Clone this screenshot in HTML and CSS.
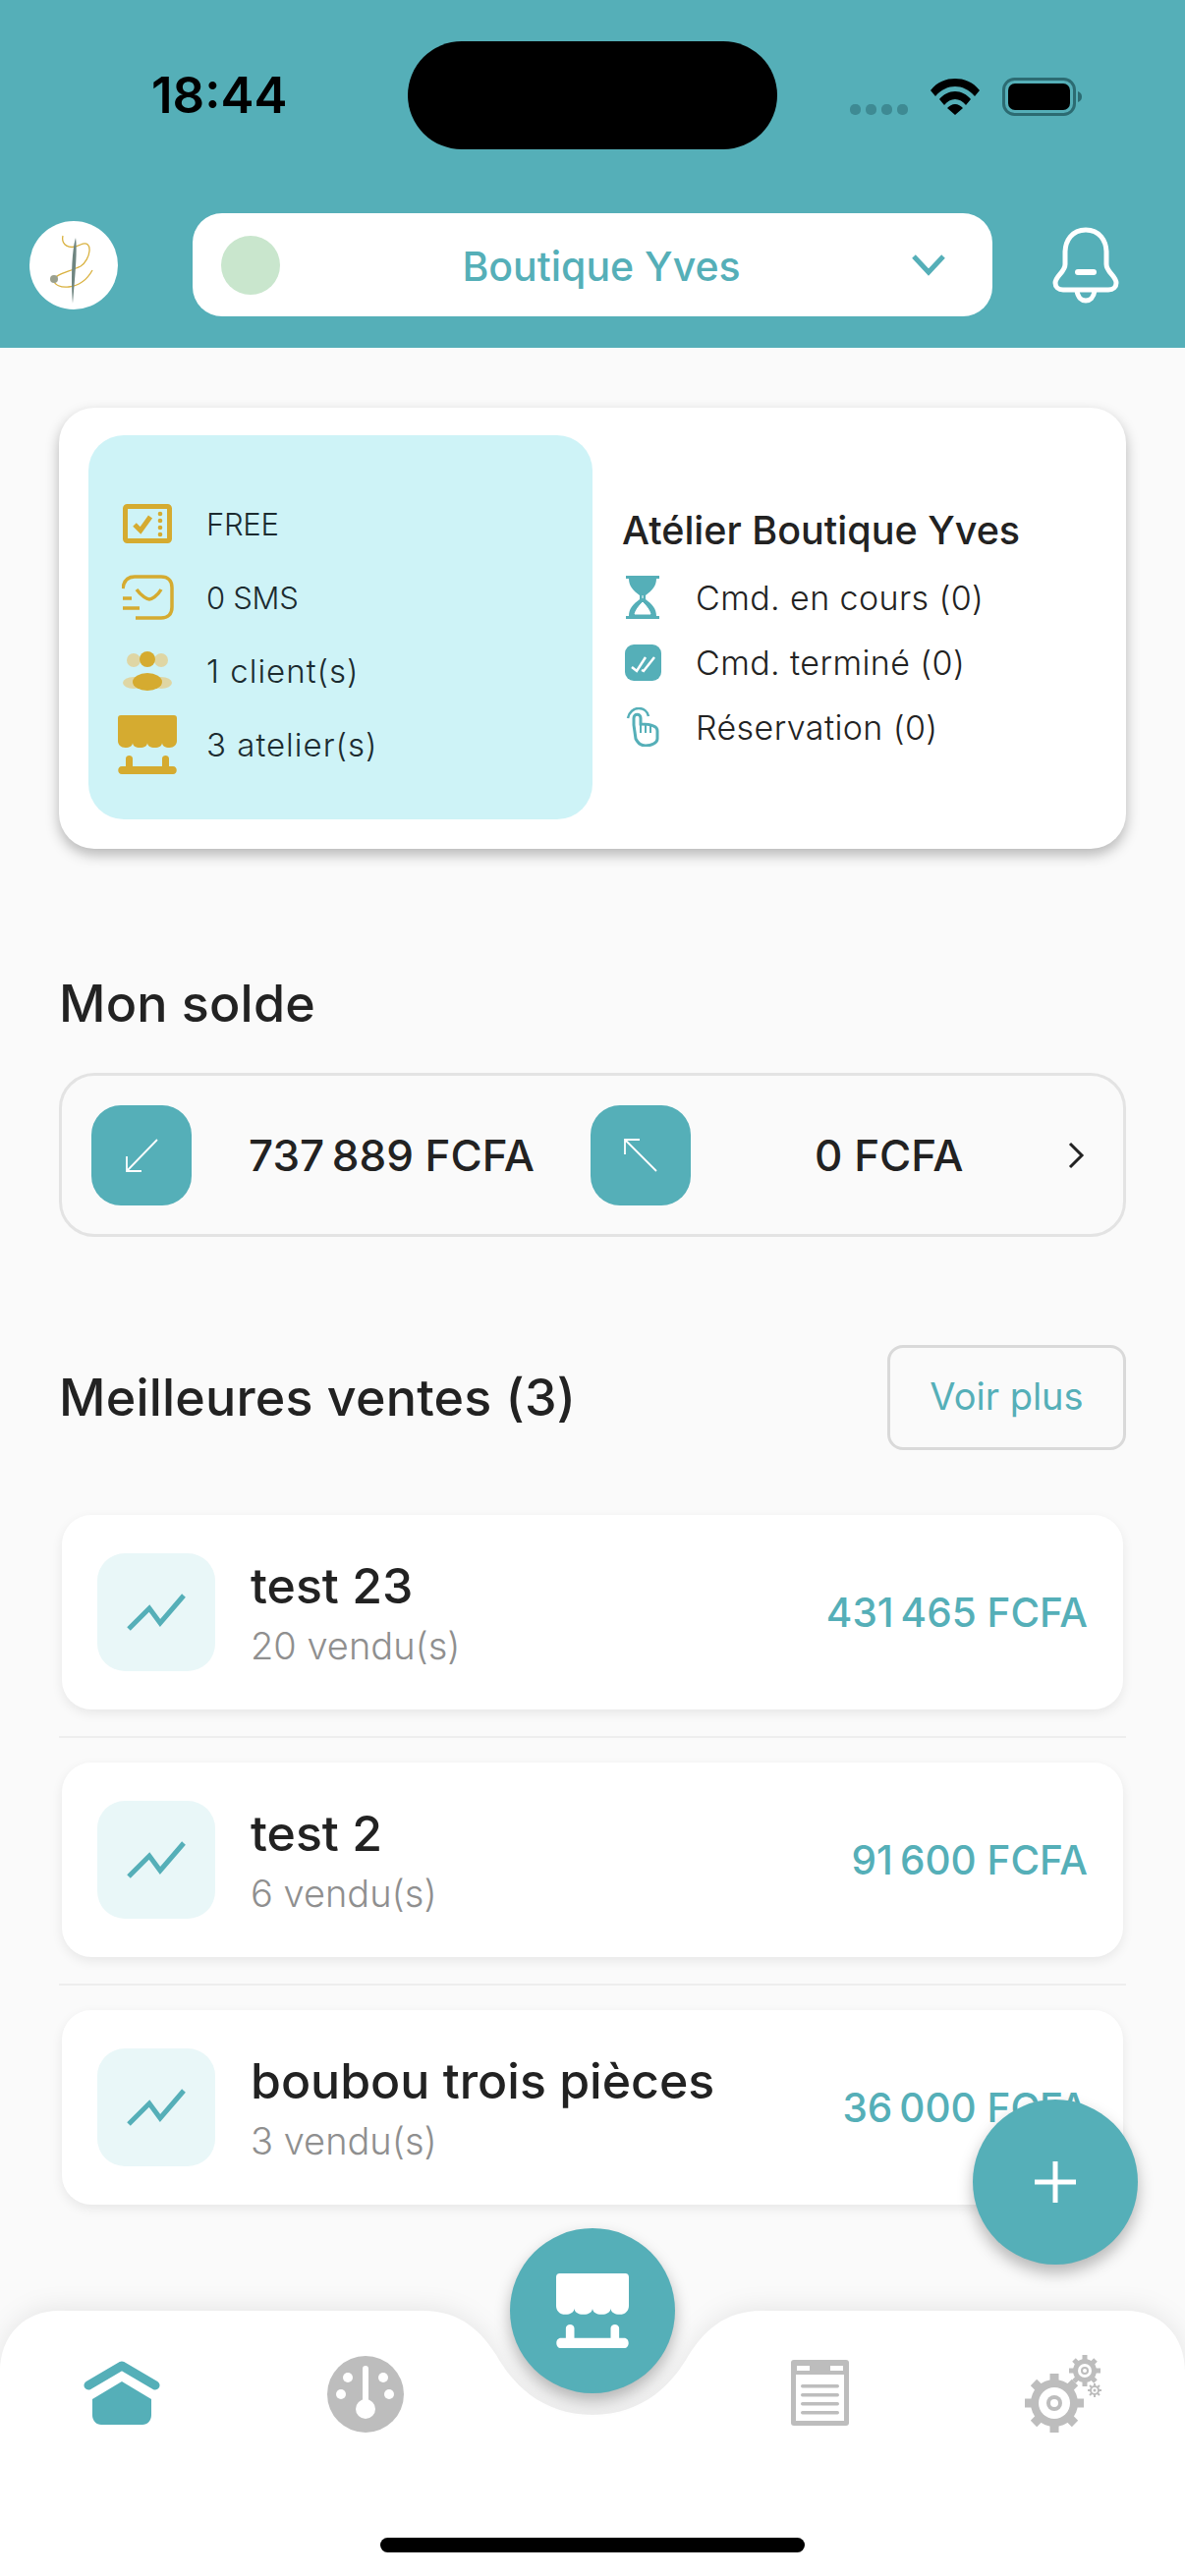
FILE: index.html
```html
<!DOCTYPE html>
<html lang="fr">
<head>
<meta charset="utf-8">
<title>Boutique Yves</title>
<link rel="stylesheet" href="styles.css">
</head>
<body>
<div class="page">
  <header class="header">
    <div class="status">
      <span class="time">18:44</span>
      <span class="island"></span>
      <div class="status-icons">
        <span class="dots"><i></i><i></i><i></i><i></i></span>
        <svg class="wifi" width="50" height="37" viewBox="0 0 50 37"><path d="M0 12 C7 3 16 0 25 0 C34 0 43 3 50 12 L45 18 C39 11 32 8 25 8 C18 8 11 11 5 18Z M9 21 C13 16 19 13 25 13 C31 13 37 16 41 21 L36 27 C33 23 29 21 25 21 C21 21 17 23 14 27Z M17 30 C19 28 22 26 25 26 C28 26 31 28 33 30 L25 37Z" fill="#000"/></svg>
        <svg class="battery" width="81" height="39" viewBox="0 0 81 39"><rect x="1.5" y="1.5" width="72" height="36" rx="11" fill="none" stroke="#2c6b72" stroke-width="3"/><rect x="6" y="6" width="63" height="27" rx="7" fill="#000"/><path d="M77 14 C80 15 81 17 81 19.500 C81 22 80 24 77 25Z" fill="#2c6b72"/></svg>
      </div>
    </div>
    <div class="toolbar">
      <div class="logo">
        <svg width="90" height="90" viewBox="0 0 90 90"><path d="M34 15 C32 24 40 30 52 24 C66 18 62 40 52 46 C40 52 26 54 25 60 C25 70 52 72 64 50" fill="none" stroke="#d9b13f" stroke-width="1.300"/><path d="M47 17 C49 30 46 60 44 84 C42 60 43 30 47 17Z" fill="#6f8580"/><circle cx="25" cy="59" r="4" fill="#9aa08e"/></svg>
      </div>
      <div class="select">
        <span class="select-dot"></span>
        <span class="select-name">Boutique Yves</span>
        <svg class="chev" width="36" height="23" viewBox="0 0 36 23"><path d="M3 3 L18 19 L33 3" fill="none" stroke="#55afb8" stroke-width="5"/></svg>
      </div>
      <svg class="bell" width="68" height="78" viewBox="0 0 68 78"><path d="M34 3 C20 3 13 14 13 26 V38 C13 46 3 50 3 57 C3 61 6 64 11 64 H57 C62 64 65 61 65 57 C65 50 55 46 55 38 V26 C55 14 48 3 34 3Z" fill="none" stroke="#fff" stroke-width="5"/><path d="M25 65 C26 72 30 75 34 75 C38 75 42 72 43 65" fill="none" stroke="#fff" stroke-width="5"/><rect x="23" y="43" width="22" height="6" rx="3" fill="#fff"/></svg>
    </div>
  </header>

  <main class="main">
    <section class="card">
      <div class="plan">
        <div class="plan-row">
          <span class="plan-ico"><svg width="50" height="40" viewBox="0 0 50 40"><rect x="2.500" y="2.500" width="45" height="35" rx="2" fill="none" stroke="#d5ab30" stroke-width="5"/><path d="M12 21 L18 27 L28 13" fill="none" stroke="#d5ab30" stroke-width="5"/><circle cx="38" cy="10" r="2.300" fill="#d5ab30"/><circle cx="38" cy="17" r="2.300" fill="#d5ab30"/><circle cx="38" cy="24" r="2.300" fill="#d5ab30"/><circle cx="38" cy="31" r="2.300" fill="#d5ab30"/></svg></span>
          <span class="plan-text plan-caps">FREE</span>
        </div>
        <div class="plan-row">
          <span class="plan-ico"><svg width="53" height="46" viewBox="0 0 53 46"><path d="M1 14 C2 6 6 2 13 2 H40 C47 2 51 6 51 13 V33 C51 40 47 44 40 44 H14" fill="none" stroke="#d5ab30" stroke-width="3.500"/><path d="M15 15 C20 22 26 25 28 25 C30 25 36 22 40 15" fill="none" stroke="#d5ab30" stroke-width="3.500"/><path d="M1 24 H10 M1 34 H18" stroke="#d5ab30" stroke-width="3.500"/></svg></span>
          <span class="plan-text plan-caps">0 SMS</span>
        </div>
        <div class="plan-row">
          <span class="plan-ico"><svg width="50" height="40" viewBox="0 0 50 40"><circle cx="11" cy="9" r="7" fill="#dfd6a4"/><circle cx="39" cy="9" r="7" fill="#dfd6a4"/><ellipse cx="11" cy="32" rx="11" ry="6" fill="#dfd6a4"/><ellipse cx="39" cy="32" rx="11" ry="6" fill="#dfd6a4"/><circle cx="25" cy="8" r="8" fill="#d5ab30"/><ellipse cx="25" cy="31" rx="15" ry="9" fill="#d5ab30"/></svg></span>
          <span class="plan-text">1 client(s)</span>
        </div>
        <div class="plan-row">
          <span class="plan-ico"><svg width="60" height="60" viewBox="0 0 60 60"><path d="M3 0 H57 C59 0 60 1 60 3 V26 C60 30 57 33 52.500 33 C48 33 45 31 45 28 C45 31 42 33 37.500 33 C33 33 30 31 30 28 C30 31 27 33 22.500 33 C18 33 15 31 15 28 C15 31 12 33 7.500 33 C3 33 0 30 0 26 V3 C0 1 1 0 3 0Z M8 52 V44 C8 40 15 40 15 44 V52 H45 V44 C45 40 52 40 52 44 V52 H56 C61 52 61 60 56 60 H4 C-1 60 -1 52 4 52Z" fill="#d5ab30"/></svg></span>
          <span class="plan-text">3 atelier(s)</span>
        </div>
      </div>
      <div class="stats">
        <h3 class="stats-title">Atélier Boutique Yves</h3>
        <div class="stat-row">
          <span class="stat-ico"><svg width="34" height="44" viewBox="0 0 34 44"><path d="M0 0 H34 V3 H31 C31 10 27 15 20 20 V24 C27 29 31 34 31 41 H34 V44 H0 V41 H3 C3 34 7 29 14 24 V20 C7 15 3 10 3 3 H0Z" fill="#55afb8"/><path d="M17 27 C13 31 10 35 9 39 H25 C24 35 21 31 17 27Z M17 20 V23" fill="#fff" stroke="#fff" stroke-width="1"/></svg></span>
          <span class="stat-text">Cmd. en cours (0)</span>
        </div>
        <div class="stat-row">
          <span class="stat-ico"><svg width="37" height="37" viewBox="0 0 37 37"><rect width="37" height="37" rx="9" fill="#55afb8"/><path d="M7 23 L12 27 L21 13 M17 26 L19 27 L30 13" fill="none" stroke="#fff" stroke-width="2.500"/></svg></span>
          <span class="stat-text">Cmd. terminé (0)</span>
        </div>
        <div class="stat-row">
          <span class="stat-ico"><svg width="34" height="40" viewBox="0 0 34 40"><path d="M2 11 C3 5 8 1 13 1 C18 1 22 4 23 9" fill="none" stroke="#55afb8" stroke-width="2.500"/><path d="M10 32 L8 18 V11 C8 6 15 6 15 11 V17 C22 17 32 18 32 24 V32 C32 36 26 39 20 39 C15 39 12 36 10 32Z" fill="none" stroke="#55afb8" stroke-width="3"/><path d="M15 18 V26 M20 18 V26 M25 19 V26" stroke="#55afb8" stroke-width="2"/></svg></span>
          <span class="stat-text">Réservation (0)</span>
        </div>
      </div>
    </section>

    <h2 class="title solde-title">Mon solde</h2>
    <section class="balance">
      <span class="bal-ico"><svg width="102" height="102" viewBox="0 0 102 102"><path d="M67 35 L36 67 M36 52 V67 H51" fill="none" stroke="#fff" stroke-width="1.800"/></svg></span>
      <span class="bal-val bal-in">737&#8239;889 FCFA</span>
      <span class="bal-ico"><svg width="102" height="102" viewBox="0 0 102 102"><path d="M67 67 L35 35 M35 50 V35 H50" fill="none" stroke="#fff" stroke-width="1.800"/></svg></span>
      <span class="bal-val bal-out">0 FCFA</span>
      <svg class="bal-chev" width="18" height="28" viewBox="0 0 18 28"><path d="M3 2 L15 14 L3 26" fill="none" stroke="#222" stroke-width="3"/></svg>
    </section>

    <div class="sales-head">
      <h2 class="title">Meilleures ventes (3)</h2>
      <span class="more">Voir plus</span>
    </div>

    <div class="sales">
      <article class="sale">
        <span class="sale-ico"><svg width="120" height="120" viewBox="0 0 120 120"><path d="M32 77 L53 56 L64 71 L88 43" fill="none" stroke="#55afb8" stroke-width="5"/></svg></span>
        <div class="sale-info"><div class="sale-name">test 23</div><div class="sale-sub">20 vendu(s)</div></div>
        <span class="sale-amt">431&#8239;465 FCFA</span>
      </article>
      <hr class="sep">
      <article class="sale">
        <span class="sale-ico"><svg width="120" height="120" viewBox="0 0 120 120"><path d="M32 77 L53 56 L64 71 L88 43" fill="none" stroke="#55afb8" stroke-width="5"/></svg></span>
        <div class="sale-info"><div class="sale-name">test 2</div><div class="sale-sub">6 vendu(s)</div></div>
        <span class="sale-amt">91&#8239;600 FCFA</span>
      </article>
      <hr class="sep">
      <article class="sale">
        <span class="sale-ico"><svg width="120" height="120" viewBox="0 0 120 120"><path d="M32 77 L53 56 L64 71 L88 43" fill="none" stroke="#55afb8" stroke-width="5"/></svg></span>
        <div class="sale-info"><div class="sale-name">boubou trois pièces</div><div class="sale-sub">3 vendu(s)</div></div>
        <span class="sale-amt">36&#8239;000 FCFA</span>
      </article>
    </div>
  </main>

  <nav class="nav">
    <svg class="nav-bg" width="1206" height="270" viewBox="0 0 1206 270"><path d="M0 62 C0 25 25 0 60 0 H430 C470 0 490 22 505 45 C520 72 550 106 603 106 C656 106 686 72 701 45 C716 22 736 0 776 0 H1146 C1181 0 1206 25 1206 62 V270 H0Z" fill="#fff"/></svg>
    <svg class="nav-ico nav-home" width="78" height="65" viewBox="0 0 78 65"><path d="M5 25 L39 5 L73 25" fill="none" stroke="#55afb8" stroke-width="9" stroke-linecap="round" stroke-linejoin="round"/><path d="M39 21 L69 39 V55 C69 61 65 65 60 65 H18 C13 65 9 61 9 55 V39Z" fill="#55afb8"/></svg>
    <svg class="nav-ico nav-gauge" width="78" height="78" viewBox="0 0 78 78"><circle cx="39" cy="39" r="39" fill="#bdbdbd"/><circle cx="39" cy="54" r="10" fill="#fff"/><rect x="36" y="10" width="6" height="40" rx="3" fill="#fff"/><circle cx="21" cy="22" r="5" fill="#fff"/><circle cx="57" cy="22" r="5" fill="#fff"/><circle cx="14" cy="39" r="5" fill="#fff"/><circle cx="63" cy="39" r="5" fill="#fff"/></svg>
    <svg class="nav-ico nav-doc" width="59" height="67" viewBox="0 0 59 67"><rect width="59" height="67" rx="3" fill="#bdbdbd"/><rect x="5" y="15" width="49" height="47" fill="#fff"/><rect x="6" y="6" width="13" height="5" fill="#fff"/><rect x="40" y="6" width="13" height="5" fill="#fff"/><g fill="#bdbdbd"><rect x="10" y="25" width="39" height="3.500" rx="1.700"/><rect x="10" y="34" width="39" height="3.500" rx="1.700"/><rect x="10" y="43" width="39" height="3.500" rx="1.700"/><rect x="10" y="52" width="39" height="3.500" rx="1.700"/></g></svg>
    <svg class="nav-ico nav-gear" width="82" height="80" viewBox="0 0 82 80"><g fill="#bdbdbd"><circle cx="32" cy="50" r="24"/><g stroke="#bdbdbd" stroke-width="9"><path d="M32 20 V80 M2 50 H62 M11 29 L53 71 M53 29 L11 71"/></g><circle cx="63" cy="17" r="12"/><g stroke="#bdbdbd" stroke-width="5"><path d="M63 1 V33 M47 17 H79 M52 6 L74 28 M74 6 L52 28"/></g><circle cx="73" cy="37" r="5"/><g stroke="#bdbdbd" stroke-width="2"><path d="M73 30 V44 M66 37 H80 M68 32 L78 42 M78 32 L68 42"/></g></g><circle cx="32" cy="50" r="16" fill="#fff"/><circle cx="32" cy="50" r="8" fill="#bdbdbd"/><circle cx="32" cy="50" r="4" fill="#fff"/><circle cx="63" cy="17" r="7" fill="#fff"/><circle cx="63" cy="17" r="4" fill="#bdbdbd"/><circle cx="63" cy="17" r="2" fill="#fff"/><circle cx="73" cy="37" r="3" fill="#fff"/><circle cx="73" cy="37" r="1.500" fill="#bdbdbd"/></svg>
    <span class="home-bar"></span>
  </nav>

  <button class="fab-center" type="button"><svg width="74" height="76" viewBox="0 0 60 60" preserveAspectRatio="none"><path d="M3 0 H57 C59 0 60 1 60 3 V26 C60 30 57 33 52.500 33 C48 33 45 31 45 28 C45 31 42 33 37.500 33 C33 33 30 31 30 28 C30 31 27 33 22.500 33 C18 33 15 31 15 28 C15 31 12 33 7.500 33 C3 33 0 30 0 26 V3 C0 1 1 0 3 0Z M8 52 V44 C8 40 15 40 15 44 V52 H45 V44 C45 40 52 40 52 44 V52 H56 C61 52 61 60 56 60 H4 C-1 60 -1 52 4 52Z" fill="#fff"/></svg></button>
  <button class="fab-plus" type="button"><svg width="42" height="42" viewBox="0 0 42 42"><path d="M21 0 V42 M0 21 H42" stroke="#fff" stroke-width="5"/></svg></button>
</div>
</body>
</html>
```

FILE: styles.css
```css
* { box-sizing: border-box; }
html, body { margin: 0; padding: 0; }
body { font-family: "Inter", "Noto Sans", sans-serif; color: #222; background: #fafafa; }
.page { position: relative; width: 1206px; height: 2622px; overflow: hidden; background: #fafafa; }

.header { height: 354px; background: #55afb8; }
.status { display: grid; grid-template-columns: 415px 376px 1fr; height: 175px; padding-top: 42px; }
.time { padding: 31px 0 0 154px; font-size: 51px; line-height: 48px; font-weight: 600; color: #000; }
.island { height: 110px; border-radius: 55px; background: #000; }
.status-icons { display: flex; align-items: flex-end; height: 75px; padding-left: 74px; }
.dots { display: flex; gap: 5px; margin-right: 23px; }
.dots i { width: 11px; height: 11px; border-radius: 5px; background: #3e8a93; }
.wifi { margin-right: 23px; }
.battery { margin-bottom: -1px; }
.toolbar { display: flex; align-items: center; height: 105px; margin-top: 42px; padding-left: 30px; }
.logo { width: 90px; height: 90px; border-radius: 50%; background: #fff; overflow: hidden; }
.logo svg { display: block; }
.select { display: flex; align-items: center; width: 814px; height: 105px; margin-left: 76px; padding: 0 47px 0 29px; border-radius: 30px; background: #fff; }
.select-dot { width: 60px; height: 60px; border-radius: 50%; background: #c9e6cd; }
.select-name { flex: 1; padding: 2px 0 0 12px; text-align: center; font-size: 41px; font-weight: 500; color: #55afb8; }
.bell { margin-left: 61px; }

.main { padding: 61px 60px 0; }
.card { display: flex; height: 449px; padding: 28px 0 30px 30px; border-radius: 36px; background: #fff; box-shadow: 0 6px 14px rgba(0,0,0,.28); }
.plan { display: flex; flex: none; flex-direction: column; justify-content: center; gap: 15px; width: 513px; padding-top: 14px; border-radius: 36px; background: #cef3f7; }
.plan-row { display: flex; align-items: center; height: 60px; }
.plan-ico { display: flex; justify-content: center; width: 120px; }
.plan-text { font-size: 33px; font-weight: 300; letter-spacing: 1px; color: #1c2b30; }
.plan-caps { font-size: 31px; letter-spacing: -.3px; }
.stats { padding: 62px 0 0 30px; }
.stats-title { margin: 0; font-size: 39.5px; line-height: 70px; font-weight: 500; color: #222; }
.stat-row { display: flex; align-items: center; height: 66px; }
.stat-ico { display: flex; justify-content: center; width: 42px; margin-right: 33px; }
.stat-text { font-size: 34px; font-weight: 300; letter-spacing: .4px; color: #222; }

.title { margin: 0; font-size: 52px; line-height: 72px; font-weight: 500; letter-spacing: .2px; color: #222; }
.solde-title { margin-top: 122px; }
.balance { display: flex; align-items: center; height: 167px; margin-top: 34px; padding-left: 30px; border: 3px solid #e3e3e3; border-radius: 36px; }
.bal-ico { width: 102px; height: 102px; flex: none; border-radius: 30px; background: #55afb8; }
.bal-ico svg { display: block; }
.bal-val { font-size: 44px; font-weight: 500; color: #222; }
.bal-in { width: 406px; padding-left: 58px; }
.bal-out { width: 383px; padding-left: 126px; }
.sales-head { display: flex; align-items: center; justify-content: space-between; height: 107px; margin-top: 110px; }
.more { display: flex; align-items: center; justify-content: center; width: 243px; height: 107px; padding-bottom: 3px; border: 3px solid #d9d9d9; border-radius: 16px; font-size: 38px; color: #55afb8; }
.sales { margin-top: 66px; padding: 0 3px; }
.sale { display: flex; align-items: center; height: 198px; padding: 0 36px; border-radius: 30px; background: #fff; box-shadow: 0 4px 12px rgba(0,0,0,.08); }
.sale-ico { width: 120px; height: 120px; flex: none; border-radius: 28px; background: #e9f7f8; }
.sale-ico svg { display: block; }
.sale-info { flex: 1; margin-left: 36px; }
.sale-name { margin-top: -3px; font-size: 50px; line-height: 62px; font-weight: 500; color: #222; }
.sale-sub { margin-top: 5px; margin-bottom: -3px; font-size: 38px; font-weight: 300; line-height: 50px; color: #8f8f8f; }
.sale-amt { font-size: 40.5px; font-weight: 500; color: #55afb8; }
.sep { height: 2px; margin: 27px -3px 25px; border: 0; background: #eee; }

.nav { position: absolute; left: 0; top: 2352px; width: 1206px; height: 270px; }
.nav-bg { position: absolute; left: 0; top: 0; filter: drop-shadow(0 -3px 12px rgba(0,0,0,.08)); }
.nav-ico { position: absolute; }
.nav-home { left: 85px; top: 51px; }
.nav-gauge { left: 333px; top: 46px; }
.nav-doc { left: 805px; top: 50px; }
.nav-gear { left: 1041px; top: 44px; }
.home-bar { position: absolute; left: 387px; top: 231px; width: 432px; height: 15px; border-radius: 8px; background: #000; }

.fab-center, .fab-plus { position: absolute; display: flex; align-items: center; justify-content: center; width: 168px; height: 168px; padding: 0; border: 0; border-radius: 50%; background: #55afb8; box-shadow: 0 8px 16px rgba(0,0,0,.28); }
.fab-center { left: 519px; top: 2268px; }
.fab-plus { left: 990px; top: 2137px; }
```
